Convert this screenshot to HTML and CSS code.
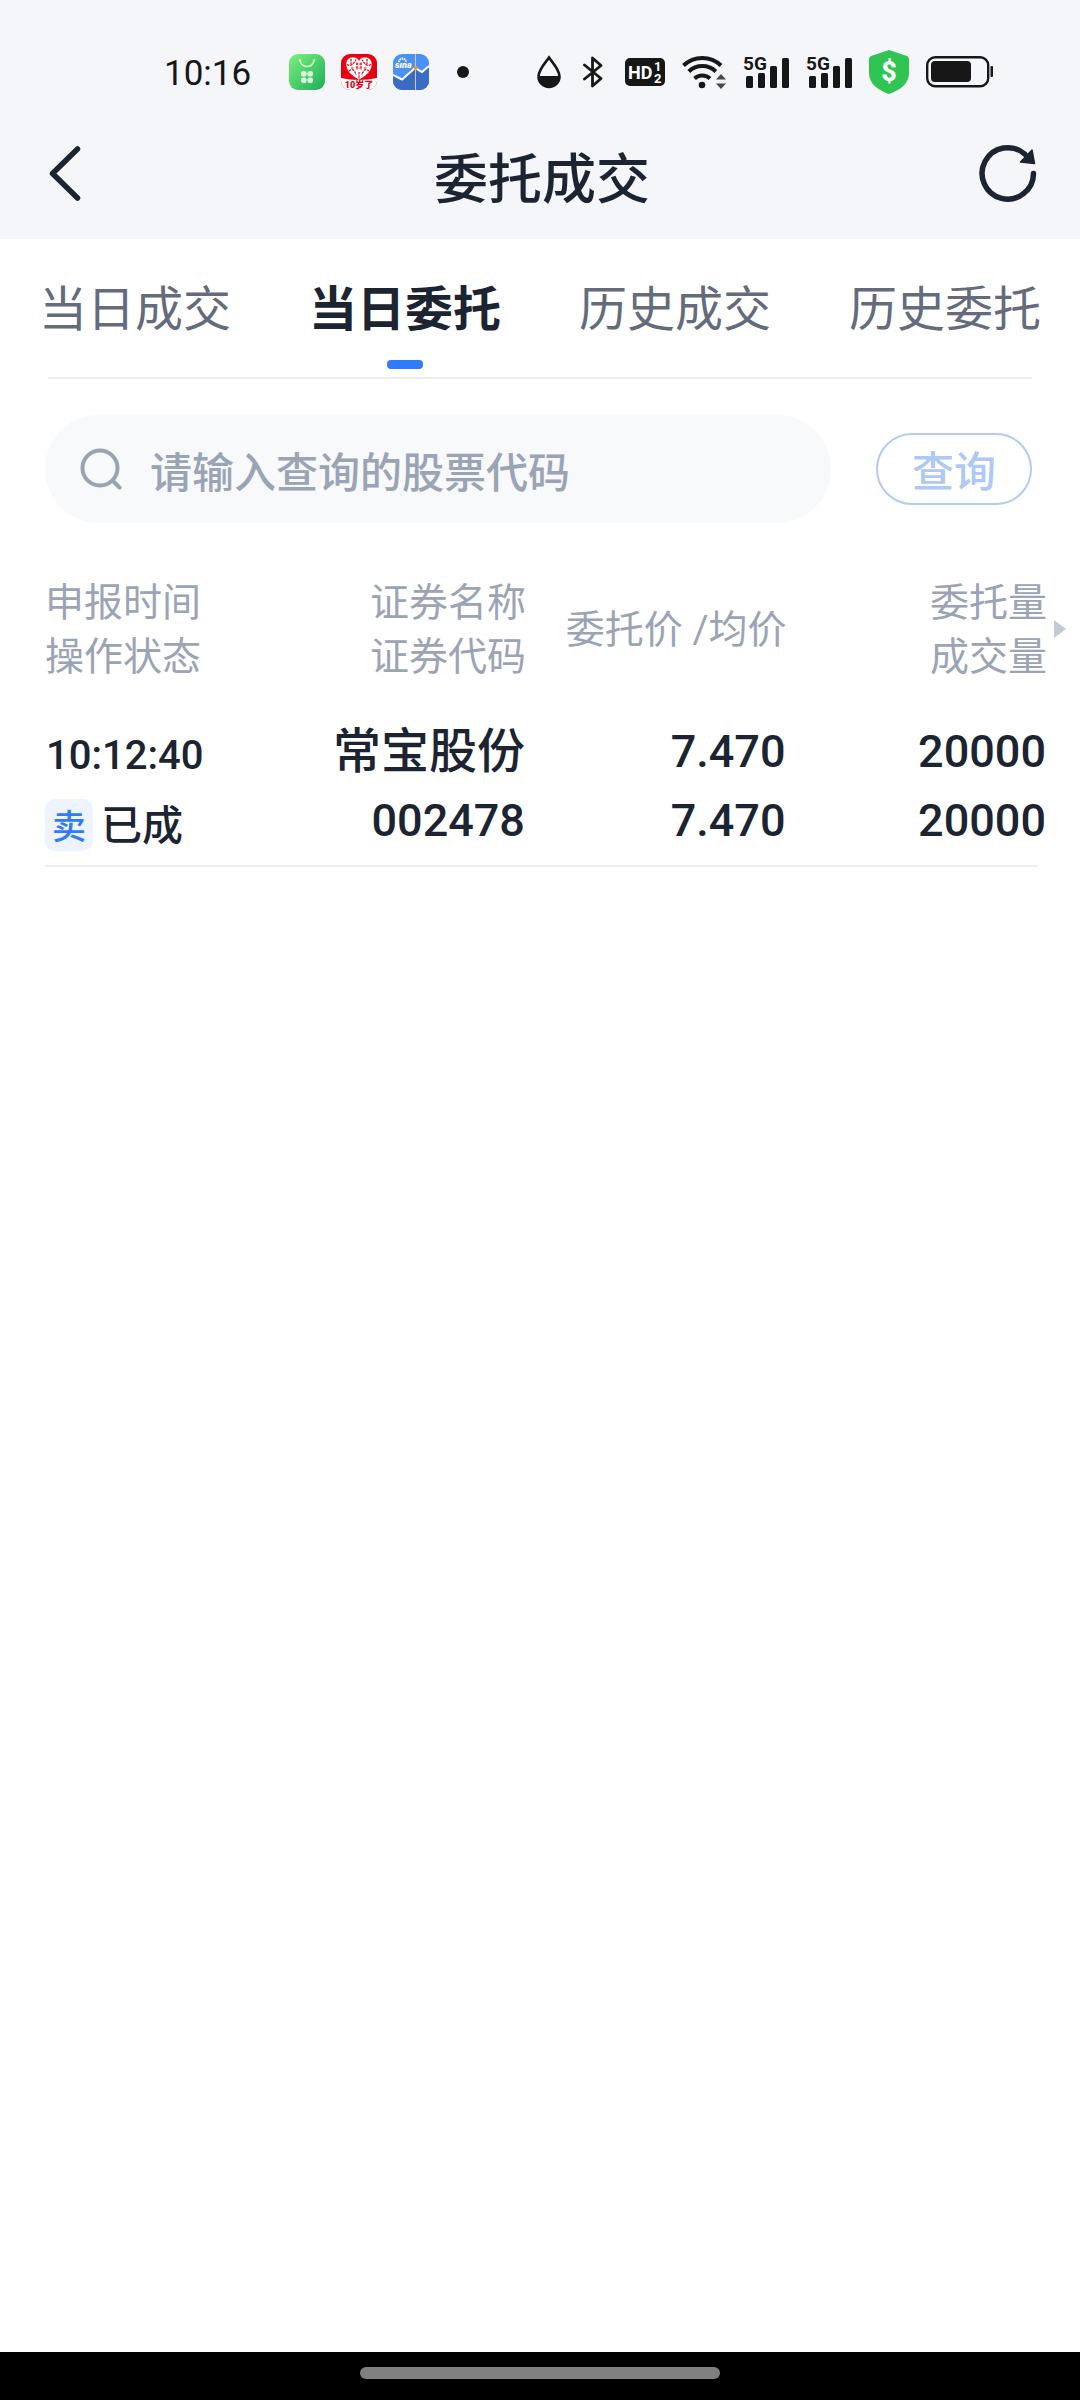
FILE: index.html
```html
<!DOCTYPE html>
<html lang="zh-CN">
<head>
<meta charset="utf-8">
<meta name="viewport" content="width=device-width, initial-scale=1">
<title>委托成交</title>
<link rel="stylesheet" href="styles.css">
</head>
<body>
<div class="page">
  <header class="top">
    <div class="status">
      <span class="clock">10:16</span>
      <div class="apps">
        <svg width="36" height="36" viewBox="0 0 36 36" aria-hidden="true">
          <defs><linearGradient id="shop" x1="0" y1="0" x2="1" y2="1"><stop offset="0" stop-color="#7df07c"/><stop offset="1" stop-color="#1cae58"/></linearGradient></defs>
          <rect width="36" height="36" rx="9" fill="url(#shop)"/>
          <path d="M10.500 5c1 5 4 7.500 7.500 7.500s6.500-2.500 7.500-7.500" fill="none" stroke="#d5fbc9" stroke-width="1.600"/>
          <g fill="#dcf8dc"><rect x="12" y="17" width="5.600" height="5.600" rx="2.200"/><rect x="18.400" y="17" width="5.600" height="5.600" rx="2.200"/><rect x="12" y="23.400" width="5.600" height="5.600" rx="2.200"/><rect x="18.400" y="23.400" width="5.600" height="5.600" rx="2.200"/></g>
        </svg>
        <svg width="36" height="36" viewBox="0 0 36 36" aria-hidden="true">
          <defs><clipPath id="r"><rect width="36" height="36" rx="9"/></clipPath></defs>
          <g clip-path="url(#r)">
            <rect width="36" height="36" fill="#e60012"/>
            <path d="M0 24q18 4 36 0v12H0z" fill="#fff"/>
            <path d="M18 26C9 21 5 16 5 10c0-4 3-7 7-7 3 0 5 1.500 6 3.500C19 4.500 21 3 24 3c4 0 7 3 7 7 0 6-4 11-13 16z" fill="#fff" stroke="#e60012" stroke-width=".6"/>
            <path d="M6 10.500q5 3 9-5M30 10.500q-5 3-9-5M8 17q5-4 7 4M28 17q-5-4-7 4M15 10h6M15 14h6M16 8.500v7M20 8.500v7M18 18v7M10 5v5M26 5v5M10 14h3M23 14h3" fill="none" stroke="#e60012" stroke-width="1.200" stroke-dasharray="2.500 .8"/>
            <text x="18" y="34" text-anchor="middle" class="app-label">10岁了</text>
          </g>
        </svg>
        <svg width="36" height="36" viewBox="0 0 36 36" aria-hidden="true">
          <g clip-path="url(#r)">
            <rect width="36" height="36" fill="#4a90f5"/>
            <path d="M0 21l9 4.500L22 14l7 4 7-6v24H0z" fill="#3a6cc4"/>
            <path d="M0 21l9 4.500L22 14l7 4 7-6" fill="none" stroke="#fff" stroke-width="2"/>
            <path d="M22.500 0v36" stroke="#dcc98f" stroke-width="1"/>
            <circle cx="22.500" cy="14" r="2" fill="#f59a23"/>
            <path d="M6 8a3.500 3.500 0 1 1 7 0" fill="none" stroke="#fff" stroke-width="2" stroke-dasharray="1.600 .6"/>
            <text x="2" y="14" class="app-brand">sına</text>
          </g>
        </svg>
        <span class="dot"></span>
      </div>
      <div class="signals">
        <svg class="wide" width="24" height="34" viewBox="0 0 24 34" aria-hidden="true"><path d="M12 2.500C9 7 1.500 14.500 1.500 21.500a10.500 10.500 0 0 0 21 0C22.500 14.500 15 7 12 2.500z" fill="none" stroke="#171717" stroke-width="2.600"/><path d="M1.500 21h21c0 7-5 11-10.500 11S1.500 28 1.500 21z" fill="#171717"/></svg>
        <svg class="wide" width="20" height="34" viewBox="0 0 20 34" aria-hidden="true"><path d="M1.500 10l16.500 13.500L9.500 31V3L18 10.500 1.500 24" fill="none" stroke="#171717" stroke-width="2.800" stroke-linejoin="round" stroke-linecap="round"/></svg>
        <svg width="40" height="28" viewBox="0 0 40 28" aria-hidden="true"><rect width="40" height="28" rx="5" fill="#171717"/><text x="3" y="21" class="hd">HD</text><text x="29" y="13" class="hd-sim">1</text><text x="29" y="25" class="hd-sim">2</text></svg>
        <svg width="44" height="34" viewBox="0 0 44 34" aria-hidden="true"><g fill="none" stroke="#171717" stroke-width="4"><path d="M1.500 10.500a27 27 0 0 1 37.500 0"/><path d="M6.800 16.500a19.500 19.500 0 0 1 27 0"/><path d="M12.500 23.500a11.500 11.500 0 0 1 15.500 0"/></g><circle cx="20" cy="30" r="3.300" fill="#171717"/><path d="M34 24.500l5-5.500 5 5.500zM34 28.500l5 5.500 5-5.500z" fill="#484848"/></svg>
        <svg width="46" height="46" viewBox="0 -7 46 46" aria-hidden="true"><text x="0" y="14" class="gen">5G</text><g fill="#171717"><rect x="3" y="20" width="7" height="12" rx="1.500"/><rect x="15" y="17" width="7" height="15" rx="1.500"/><rect x="27" y="10" width="7" height="22" rx="1.500"/><rect x="39" y="2" width="7" height="30" rx="1.500"/></g></svg>
        <svg width="46" height="46" viewBox="0 -7 46 46" aria-hidden="true"><text x="0" y="14" class="gen">5G</text><g fill="#171717"><rect x="3" y="20" width="7" height="12" rx="1.500"/><rect x="15" y="17" width="7" height="15" rx="1.500"/><rect x="27" y="10" width="7" height="22" rx="1.500"/><rect x="39" y="2" width="7" height="30" rx="1.500"/></g></svg>
        <svg width="40" height="44" viewBox="0 0 40 44" aria-hidden="true"><path d="M20 0l18 6q2 1 2 3v14c0 11-9 17-20 21C9 40 0 34 0 23V9q0-2 2-3z" fill="#30c552"/><text x="20" y="31" text-anchor="middle" class="coin">$</text></svg>
        <svg width="67" height="32" viewBox="0 0 67 32" aria-hidden="true"><rect x="1.200" y="1.200" width="61" height="29" rx="8" fill="none" stroke="#171717" stroke-width="2.400"/><rect x="5" y="5" width="40" height="21" rx="4" fill="#171717"/><rect x="64.500" y="10" width="2.500" height="11" rx="1" fill="#171717"/></svg>
      </div>
    </div>
    <div class="bar">
      <button type="button" class="icon-btn" aria-label="返回">
        <svg width="60" height="68" viewBox="0 0 60 68"><path d="M32.500 5L7.500 29.500l25 24.500" fill="none" stroke="#1b2430" stroke-width="5.500" stroke-linecap="round" stroke-linejoin="round"/></svg>
      </button>
      <h1 class="title">委托成交</h1>
      <button type="button" class="icon-btn" aria-label="刷新">
        <svg width="60" height="68" viewBox="0 0 60 68"><path d="M54.500 29.500A25.700 25.700 0 1 1 46 10.300" fill="none" stroke="#1b2430" stroke-width="5.500" stroke-linecap="round"/><path d="M53 6l2.500 13.500-14-1.500z" fill="#1b2430" stroke="#1b2430" stroke-width="1.500" stroke-linejoin="round"/></svg>
      </button>
    </div>
  </header>
  <main class="content">
    <nav class="tabs">
      <button type="button" class="tab">当日成交</button>
      <button type="button" class="tab tab-active" aria-current="page">当日委托</button>
      <button type="button" class="tab">历史成交</button>
      <button type="button" class="tab">历史委托</button>
    </nav>
    <form class="search">
      <label class="field">
        <svg width="42" height="42" viewBox="0 0 42 42" aria-hidden="true"><circle cx="20" cy="20" r="17.500" fill="none" stroke="#9aa3b2" stroke-width="4"/><path d="M33 33l6.500 6.500" stroke="#9aa3b2" stroke-width="4" stroke-linecap="round"/></svg>
        <input type="text" class="input" placeholder="请输入查询的股票代码" aria-label="股票代码">
      </label>
      <button type="button" class="query">查询</button>
    </form>
    <table class="orders">
      <thead>
        <tr>
          <th class="first" scope="col">申报时间<br>操作状态</th>
          <th scope="col">证券名称<br>证券代码</th>
          <th scope="col">委托价 /均价</th>
          <th class="more" scope="col">委托量<br>成交量</th>
        </tr>
      </thead>
      <tbody>
        <tr>
          <td class="first">
            <div class="line time">10:12:40</div>
            <div class="line state"><span class="side">卖</span><span class="done">已成</span></div>
          </td>
          <td><div class="line name">常宝股份</div><div class="line">002478</div></td>
          <td><div class="line">7.470</div><div class="line">7.470</div></td>
          <td><div class="line">20000</div><div class="line">20000</div></td>
        </tr>
      </tbody>
    </table>
    <hr class="rule">
  </main>
  <footer class="system-nav"><span class="pill"></span></footer>
</div>
</body>
</html>
```

FILE: styles.css
```css
* {
  box-sizing: border-box;
}

body {
  margin: 0;
  background: #fff;
  color: #1b2430;
  font-family: Roboto, "Noto Sans CJK SC", sans-serif;
}

button {
  padding: 0;
  border: 0;
  background: none;
  color: inherit;
  font: inherit;
}

svg {
  display: block;
  flex: none;
}

.page {
  display: flex;
  flex-direction: column;
  min-height: 100vh;
}

/* Status bar and title bar */
.top {
  background: #f4f6fa;
}

.status {
  display: flex;
  align-items: center;
  height: 130px;
  padding: 14px 87px 0 164px;
  color: #171717;
}

.clock {
  padding-top: 4px;
  font-size: 35px;
  line-height: 40px;
}

.apps {
  display: flex;
  align-items: center;
  gap: 16px;
  margin-left: 38px;
}

.dot {
  width: 12px;
  height: 12px;
  margin-left: 12px;
  border-radius: 50%;
  background: #171717;
}

.signals {
  display: flex;
  align-items: center;
  gap: 17px;
  margin-left: auto;
}

.wide {
  margin-right: 5px;
}

.app-label {
  font-size: 9px;
  font-weight: 900;
  fill: #e60012;
}

.app-brand {
  font-size: 9px;
  font-style: italic;
  font-weight: 900;
  fill: #fff;
}

.hd {
  font-size: 18px;
  font-weight: 700;
  fill: #fff;
}

.hd-sim {
  font-size: 13px;
  font-weight: 700;
  fill: #fff;
}

.gen {
  font-size: 19px;
  font-weight: 700;
  fill: #171717;
}

.coin {
  font-size: 27px;
  font-weight: 800;
  fill: #fff;
}

.bar {
  display: flex;
  align-items: center;
  justify-content: space-between;
  height: 109px;
  padding: 0 41px 14px 45px;
}

.title {
  margin: 0;
  padding-top: 6px;
  font-size: 54px;
  font-weight: 500;
  line-height: 80px;
}

/* Tabs */
.tabs {
  display: grid;
  grid-template-columns: repeat(4, 1fr);
  height: 140px;
  background: linear-gradient(#eee, #eee) 48px 100% / calc(100% - 96px) 2px no-repeat;
}

.tab {
  display: flex;
  flex-direction: column;
  align-items: center;
  gap: 22px;
  padding-top: 43px;
  color: #646c7b;
  font-size: 48px;
  line-height: 56px;
}

.tab-active {
  color: #1b2430;
  font-weight: 700;
}

.tab-active::after {
  content: "";
  width: 36px;
  height: 9px;
  border-radius: 4px;
  background: #2f7bfb;
}

/* Search */
.search {
  display: flex;
  align-items: center;
  gap: 45px;
  padding: 36px 48px 0 45px;
}

.field {
  display: flex;
  flex: 1;
  align-items: center;
  gap: 28px;
  height: 108px;
  padding: 0 35px;
  border-radius: 54px;
  background: #f7f9fb;
}

.input {
  flex: 1;
  min-width: 0;
  height: 72px;
  padding: 8px 0 0;
  border: 0;
  outline: 0;
  background: none;
  color: #1b2430;
  font: inherit;
  font-size: 42px;
  font-weight: 500;
}

.input::placeholder {
  color: #9ba4b5;
  opacity: 1;
}

.query {
  width: 156px;
  height: 72px;
  padding-top: 8px;
  border: 2px solid #b0cbf5;
  border-radius: 36px;
  color: #afc9f6;
  font-size: 42px;
  font-weight: 500;
  line-height: 60px;
}

/* Orders */
.orders {
  width: calc(100% - 78px);
  margin: 53px 33px 0 45px;
  border-collapse: collapse;
  table-layout: fixed;
}

.orders th,
.orders td {
  padding: 0;
  text-align: right;
  vertical-align: top;
  white-space: nowrap;
}

.orders th {
  width: 26%;
  padding-bottom: 33px;
  color: #9ba4b5;
  font-size: 39px;
  font-weight: 400;
  line-height: 54px;
  vertical-align: middle;
}

.orders td {
  padding-right: 1px;
  font-size: 45px;
  font-weight: 500;
}

.orders .first {
  text-align: left;
}

.orders th.first {
  width: 22%;
}

.orders td.first {
  padding-top: 4px;
}

.more {
  position: relative;
}

.more::after {
  content: "";
  position: absolute;
  top: 44px;
  right: -19px;
  border-left: 12px solid #c3c9d6;
  border-top: 9px solid transparent;
  border-bottom: 9px solid transparent;
}

.line {
  height: 69px;
  line-height: 69px;
}

.name {
  font-size: 48px;
}

.time {
  padding-left: 1px;
  font-size: 40px;
}

.state {
  display: flex;
  align-items: center;
  gap: 8px;
  font-size: 41px;
}

.side {
  width: 48px;
  height: 52px;
  padding-top: 4px;
  border-radius: 10px;
  background: #eef4ff;
  color: #2f7bfb;
  font-size: 34px;
  line-height: 48px;
  text-align: center;
}

.done {
  padding-top: 4px;
}

.rule {
  height: 2px;
  margin: 6px 42px 0 45px;
  border: 0;
  background: #eee;
}

/* Gesture bar */
.system-nav {
  display: flex;
  justify-content: center;
  height: 48px;
  margin-top: auto;
  padding-top: 15px;
  background: #000;
}

.pill {
  width: 33.333%;
  height: 12px;
  border-radius: 6px;
  background: #808080;
}
```
